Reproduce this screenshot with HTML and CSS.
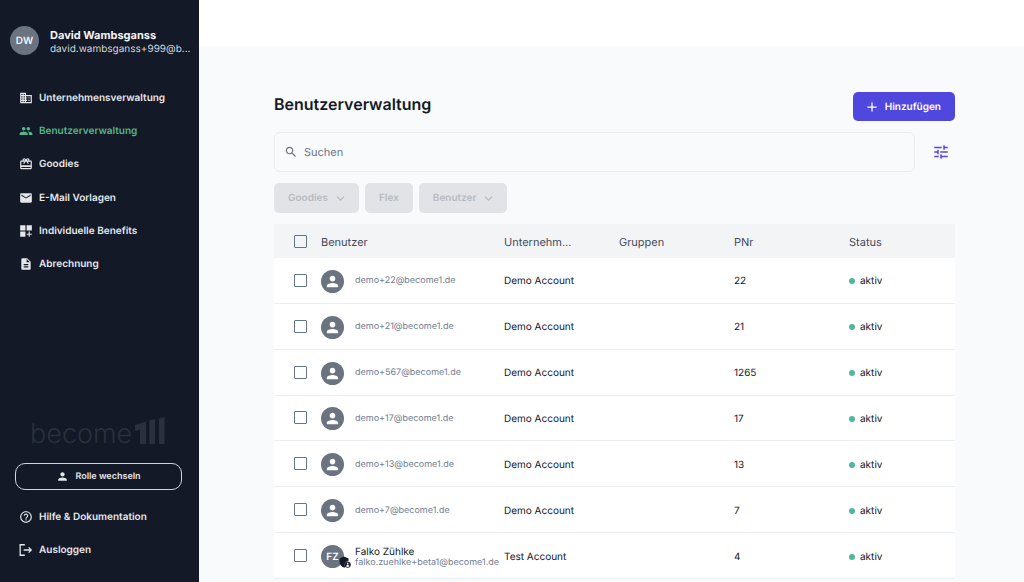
FILE: index.html
```html
<!DOCTYPE html>
<html lang="de">
<head>
<meta charset="utf-8">
<meta name="viewport" content="width=device-width, initial-scale=1">
<title>Benutzerverwaltung</title>
<link rel="stylesheet" href="styles.css">
</head>
<body>
<svg class="sprite" aria-hidden="true">
  <symbol id="i-person" viewBox="0 0 24 24"><path d="M12 12c2.210 0 4-1.790 4-4s-1.790-4-4-4-4 1.790-4 4 1.790 4 4 4zm0 2c-2.670 0-8 1.340-8 4v2h16v-2c0-2.660-5.330-4-8-4z"/></symbol>
  <symbol id="i-chevron" viewBox="0 0 24 24"><path d="M2.500 7l9.500 9.500L21.500 7" fill="none" stroke="currentColor" stroke-width="3.500"/></symbol>
</svg>
<div class="app">
  <aside class="sidebar">
    <div class="profile">
      <span class="initials">DW</span>
      <div class="profile-text">
        <div class="profile-name">David Wambsganss</div>
        <div class="profile-mail">david.wambsganss+999@b...</div>
      </div>
    </div>
    <nav class="menu">
      <a class="item" href="#"><svg class="icon" viewBox="0 0 24 24"><path d="M12 7V3H2v18h20V7H12zM6 19H4v-2h2v2zm0-4H4v-2h2v2zm0-4H4V9h2v2zm0-4H4V5h2v2zm4 12H8v-2h2v2zm0-4H8v-2h2v2zm0-4H8V9h2v2zm0-4H8V5h2v2zm10 12h-8v-2h2v-2h-2v-2h2v-2h-2V9h8v10zm-2-8h-2v2h2v-2zm0 4h-2v2h2v-2z"/></svg>Unternehmensverwaltung</a>
      <a class="item active" href="#"><svg class="icon" viewBox="0 0 24 24"><path d="M16 11c1.660 0 2.990-1.340 2.990-3S17.660 5 16 5s-3 1.340-3 3 1.340 3 3 3zm-8 0c1.660 0 2.990-1.340 2.990-3S9.660 5 8 5 5 6.340 5 8s1.340 3 3 3zm0 2c-2.330 0-7 1.170-7 3.500V19h14v-2.500c0-2.330-4.670-3.500-7-3.500zm8 0c-.29 0-.62.02-.97.05 1.160.84 1.970 1.970 1.970 3.450V19h6v-2.500c0-2.330-4.670-3.500-7-3.500z"/></svg>Benutzerverwaltung</a>
      <a class="item" href="#"><svg class="icon" viewBox="0 0 24 24"><path d="M20 6h-2.180c.11-.31.18-.65.18-1 0-1.660-1.340-3-3-3-1.050 0-1.960.54-2.500 1.350l-.5.670-.5-.68C10.960 2.540 10.050 2 9 2 7.340 2 6 3.340 6 5c0 .35.070.69.180 1H4c-1.110 0-1.990.89-1.990 2L2 19c0 1.110.89 2 2 2h16c1.110 0 2-.89 2-2V8c0-1.110-.89-2-2-2zm-5-2c.55 0 1 .45 1 1s-.45 1-1 1-1-.45-1-1 .45-1 1-1zM9 4c.55 0 1 .45 1 1s-.45 1-1 1-1-.45-1-1 .45-1 1-1zm11 15H4v-2h16v2zm0-5H4V8h5.080L7 10.830 8.620 12 11 8.760l1-1.360 1 1.360L15.380 12 17 10.830 14.920 8H20v6z"/></svg>Goodies</a>
      <a class="item" href="#"><svg class="icon" viewBox="0 0 24 24"><path d="M20 4H4c-1.100 0-1.990.9-1.990 2L2 18c0 1.100.9 2 2 2h16c1.100 0 2-.9 2-2V6c0-1.100-.9-2-2-2zm0 4l-8 5-8-5V6l8 5 8-5v2z"/></svg>E-Mail Vorlagen</a>
      <a class="item" href="#"><svg class="icon" viewBox="0 0 24 24"><path d="M2 2h9v9H2zM13 2h9v9h-9zM2 13h9v9H2zM16.500 13h2v3.500H22v2h-3.500V22h-2v-3.500H13v-2h3.500z"/></svg>Individuelle Benefits</a>
      <a class="item" href="#"><svg class="icon" viewBox="0 0 24 24"><path d="M14 2H6c-1.100 0-1.990.9-1.990 2L4 20c0 1.100.89 2 1.990 2H18c1.100 0 2-.9 2-2V8l-6-6zm2 16H8v-2h8v2zm0-4H8v-2h8v2zm-3-5V3.500L18.500 9H13z"/></svg>Abrechnung</a>
    </nav>
    <div class="brand">
      <span class="brand-word">become</span>
      <svg class="brand-bars" viewBox="0 0 30 28" aria-hidden="true"><path d="M0 8L11 4.500V27H5V12.500L0 14zM14.500 3.500l5.500-1.500V27h-5.500zM24 1.500L29.500 0v27H24z"/></svg>
    </div>
    <button class="role" type="button"><svg class="icon" aria-hidden="true"><use href="#i-person"/></svg>Rolle wechseln</button>
    <nav class="menu menu-foot">
      <a class="item" href="#"><svg class="icon" viewBox="0 0 24 24"><path d="M11 18h2v-2h-2v2zm1-16C6.480 2 2 6.480 2 12s4.480 10 10 10 10-4.480 10-10S17.520 2 12 2zm0 18c-4.410 0-8-3.590-8-8s3.590-8 8-8 8 3.590 8 8-3.590 8-8 8zm0-14c-2.210 0-4 1.790-4 4h2c0-1.100.9-2 2-2s2 .9 2 2c0 2-3 1.750-3 5h2c0-2.250 3-2.500 3-5 0-2.210-1.790-4-4-4z"/></svg>Hilfe &amp; Dokumentation</a>
      <a class="item" href="#"><svg class="icon" viewBox="0 0 24 24"><path d="M10 3H2v18h8M8 12h13M16.500 7.500L21 12l-4.500 4.500" fill="none" stroke="currentColor" stroke-width="2.200"/></svg>Ausloggen</a>
    </nav>
  </aside>
  <div class="page">
    <header class="topbar"></header>
    <main class="content">
      <div class="headline">
        <h1 class="title">Benutzerverwaltung</h1>
        <button class="add" type="button"><svg class="icon-small" viewBox="0 0 24 24"><path d="M12 1v22M1 12h22" fill="none" stroke="currentColor" stroke-width="3"/></svg>Hinzufügen</button>
      </div>
      <div class="search-row">
        <label class="search">
          <svg class="icon" viewBox="0 0 24 24" aria-hidden="true"><path d="M15.500 14h-.79l-.28-.27C15.410 12.590 16 11.110 16 9.500 16 5.910 13.090 3 9.500 3S3 5.910 3 9.500 5.910 16 9.500 16c1.610 0 3.090-.59 4.230-1.570l.27.28v.79l5 4.990L20.490 19l-4.990-5zm-6 0C7.010 14 5 11.990 5 9.500S7.010 5 9.500 5 14 7.010 14 9.500 11.990 14 9.500 14z"/></svg>
          <input class="search-input" type="search" placeholder="Suchen" aria-label="Suchen">
        </label>
        <button class="filter" type="button" aria-label="Filter"><svg class="icon-filter" viewBox="0 0 24 24"><path d="M3 17v2h6v-2H3zM3 5v2h10V5H3zm10 16v-2h8v-2h-8v-2h-2v6h2zM7 9v2H3v2h4v2h2V9H7zm14 4v-2H11v2h10zm-6-4h2V7h4V5h-4V3h-2v6z"/></svg></button>
      </div>
      <div class="chips">
        <button class="chip" type="button" disabled>Goodies<svg class="chevron"><use href="#i-chevron"/></svg></button>
        <button class="chip" type="button" disabled>Flex</button>
        <button class="chip" type="button" disabled>Benutzer<svg class="chevron"><use href="#i-chevron"/></svg></button>
      </div>
      <table class="users">
        <colgroup><col class="c-check"><col class="c-user"><col class="c-mid"><col class="c-mid"><col class="c-mid"><col></colgroup>
        <thead>
          <tr><th class="check-cell"><input class="check" type="checkbox" aria-label="Alle auswählen"></th><th>Benutzer</th><th>Unternehm...</th><th>Gruppen</th><th>PNr</th><th>Status</th></tr>
        </thead>
        <tbody>
          <tr><td class="check-cell"><input class="check" type="checkbox" aria-label="demo+22"></td><td><div class="user"><span class="avatar"><svg class="face"><use href="#i-person"/></svg></span><span class="mail">demo+22@become1.de</span></div></td><td>Demo Account</td><td></td><td>22</td><td><span class="status">aktiv</span></td></tr>
          <tr><td class="check-cell"><input class="check" type="checkbox" aria-label="demo+21"></td><td><div class="user"><span class="avatar"><svg class="face"><use href="#i-person"/></svg></span><span class="mail">demo+21@become1.de</span></div></td><td>Demo Account</td><td></td><td>21</td><td><span class="status">aktiv</span></td></tr>
          <tr><td class="check-cell"><input class="check" type="checkbox" aria-label="demo+567"></td><td><div class="user"><span class="avatar"><svg class="face"><use href="#i-person"/></svg></span><span class="mail">demo+567@become1.de</span></div></td><td>Demo Account</td><td></td><td>1265</td><td><span class="status">aktiv</span></td></tr>
          <tr><td class="check-cell"><input class="check" type="checkbox" aria-label="demo+17"></td><td><div class="user"><span class="avatar"><svg class="face"><use href="#i-person"/></svg></span><span class="mail">demo+17@become1.de</span></div></td><td>Demo Account</td><td></td><td>17</td><td><span class="status">aktiv</span></td></tr>
          <tr><td class="check-cell"><input class="check" type="checkbox" aria-label="demo+13"></td><td><div class="user"><span class="avatar"><svg class="face"><use href="#i-person"/></svg></span><span class="mail">demo+13@become1.de</span></div></td><td>Demo Account</td><td></td><td>13</td><td><span class="status">aktiv</span></td></tr>
          <tr><td class="check-cell"><input class="check" type="checkbox" aria-label="demo+7"></td><td><div class="user"><span class="avatar"><svg class="face"><use href="#i-person"/></svg></span><span class="mail">demo+7@become1.de</span></div></td><td>Demo Account</td><td></td><td>7</td><td><span class="status">aktiv</span></td></tr>
          <tr><td class="check-cell"><input class="check" type="checkbox" aria-label="Falko Zühlke"></td><td><div class="user"><span class="avatar">FZ<svg class="shield" viewBox="0 0 24 24"><path d="M10 1L1 5v6c0 5.500 3.800 10.700 9 12 1-.2 2-.6 2.800-1.200A7 7 0 0 1 19 10.500V5z"/><circle cx="17.500" cy="17.500" r="6"/><circle cx="17.500" cy="15.300" r="1.700" fill="#fff"/><path d="M14 20c.8-1.400 2-2 3.500-2s2.700.6 3.500 2c-.8 1.200-2 1.800-3.500 1.800S14.800 21.200 14 20z" fill="#fff"/></svg></span><span class="who"><span class="name">Falko Zühlke</span><span class="mail">falko.zuehlke+beta1@become1.de</span></span></div></td><td>Test Account</td><td></td><td>4</td><td><span class="status">aktiv</span></td></tr>
        </tbody>
      </table>
    </main>
  </div>
</div>
</body>
</html>
```

FILE: styles.css
```css
* { box-sizing: border-box; }
body { margin: 0; font-family: Inter, "Liberation Sans", sans-serif; font-size: 10px; line-height: 16px; color: #131926; background: #f9fafc; text-rendering: geometricPrecision; }
button, input { font-family: inherit; text-rendering: inherit; }
svg { fill: currentColor; flex: none; }
.sprite { display: none; }
.app { display: flex; height: 100vh; overflow: hidden; }

.sidebar { flex: none; width: 199px; background: #131926; color: #f3f4f6; display: flex; flex-direction: column; padding: 26px 0 16px; }
.profile { display: flex; align-items: center; gap: 11px; padding: 0 8px 0 10px; }
.initials { flex: none; width: 29px; height: 29px; border-radius: 50%; background: #6b7280; font-size: 10px; font-weight: 600; display: grid; place-items: center; }
.profile-text { min-width: 0; padding-top: 2px; }
.profile-name { font-size: 11px; line-height: 15px; font-weight: 700; }
.profile-mail { font-size: 10px; line-height: 12px; color: #d1d5db; white-space: nowrap; }
.menu { display: grid; grid-auto-rows: 1fr; min-height: 200px; margin-top: 26px; padding: 0 19px; }
.menu-foot { min-height: 66px; margin-top: 10px; }
.item { display: flex; align-items: center; gap: 6px; font-weight: 600; color: #e5e7eb; text-decoration: none; white-space: nowrap; }
.active { color: #54b689; }
.icon { width: 14px; height: 14px; }
.brand { margin-top: auto; padding: 0 30px; display: flex; align-items: flex-end; gap: 3px; color: #2a303c; }
.brand-word { font-size: 27px; line-height: 34px; font-weight: 300; }
.brand-bars { width: 30px; height: 28px; margin-bottom: 6px; }
.role { margin: 12px 17px 0 15px; height: 27px; border: 1px solid #d1d5db; border-radius: 10px; background: transparent; color: #e5e7eb; font-size: 9px; font-weight: 600; display: flex; align-items: center; justify-content: center; gap: 6px; }
.role .icon { width: 13px; height: 13px; }

.page { flex: 1; min-width: 0; }
.topbar { height: 46px; background: #fff; }
.content { padding: 46px 69px 0 75px; }
.headline { display: flex; justify-content: space-between; align-items: flex-start; }
.title { margin: 0; font-size: 16px; line-height: 24px; font-weight: 600; }
.add { height: 29px; padding: 0 14px; border: 0; border-radius: 5px; background: #5048de; color: #fff; font-size: 10px; font-weight: 600; display: flex; align-items: center; gap: 8px; }
.icon-small { width: 10px; height: 10px; }
.search-row { margin-top: 11px; display: flex; align-items: center; gap: 11px; }
.search { flex: 1; height: 40px; padding: 0 9px; border: 1px solid #e9ebef; border-radius: 6px; display: flex; align-items: center; gap: 6px; color: #6b7280; }
.search-input { flex: 1; min-width: 0; padding: 0; border: 0; outline: 0; background: transparent; font-size: 11px; color: #131926; }
.search-input::placeholder { color: #6b7588; opacity: 1; }
.filter { width: 29px; height: 29px; padding: 0; border: 0; background: transparent; color: #5048de; display: grid; place-items: center; }
.icon-filter { width: 18px; height: 18px; }
.chips { margin-top: 11px; display: flex; gap: 6px; }
.chip { height: 30px; padding: 0 14px; border: 0; border-radius: 5px; background: #e1e3e6; color: #b8bbc1; font-size: 10px; font-weight: 600; display: flex; align-items: center; gap: 8px; }
.chevron { width: 9px; height: 9px; }

.users { width: 100%; height: 355px; margin-top: 11px; table-layout: fixed; border-collapse: separate; border-spacing: 0; background: #fff; }
.c-check { width: 47px; }
.c-user { width: 183px; }
.c-mid { width: 115px; }
.users th { height: 34px; padding: 2px 0 0; background: #f3f4f6; color: #434b5a; font-size: 11px; font-weight: 400; text-align: left; }
.users td { padding: 2px 0 0; border-bottom: 1px solid #eceef0; white-space: nowrap; }
.users .check-cell { padding: 0 0 0 20px; }
.check { appearance: none; display: block; width: 13px; height: 13px; margin: 0; border: 1px solid #64748b; border-radius: 1px; }
.user { display: flex; align-items: center; gap: 11px; }
.avatar { position: relative; flex: none; width: 23px; height: 23px; border-radius: 50%; background: #6b7280; color: #fff; font-size: 10px; font-weight: 600; display: grid; place-items: center; }
.face { width: 17px; height: 17px; }
.shield { position: absolute; right: -7px; bottom: 0; width: 12px; height: 12px; color: #131926; }
.who { display: flex; flex-direction: column; }
.name { line-height: 12px; }
.mail { font-size: 9px; line-height: 10px; color: #717d92; }
.status { display: flex; align-items: center; gap: 5px; }
.status::before { content: ""; width: 6px; height: 6px; border-radius: 50%; background: #50b5a2; }
```
